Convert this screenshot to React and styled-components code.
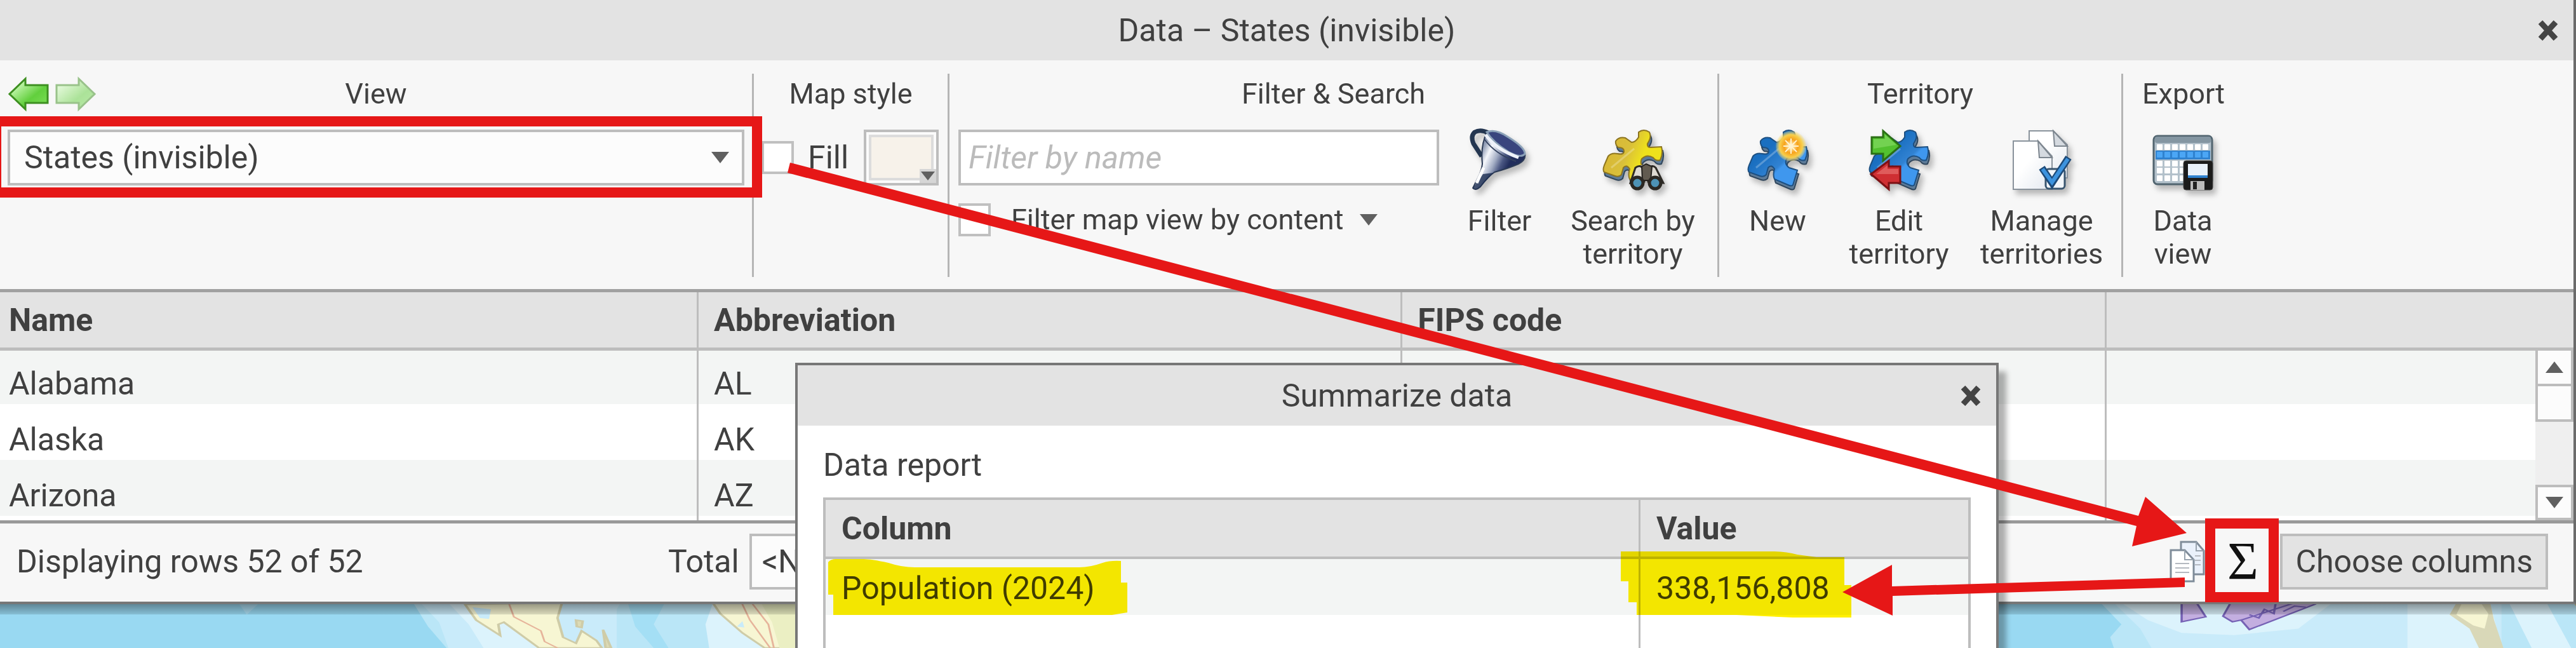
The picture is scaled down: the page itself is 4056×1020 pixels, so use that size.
import React from "react"

import styled, { createGlobalStyle, css } from 'styled-components'

const states = [
    { name: 'Alabama', code: 'AL' },
    { name: 'Alaska', code: 'AK' },
    { name: 'Arizona', code: 'AZ' },
]

const PIECE = 'M57 4 Q65 -2 74 4 Q78 12 71 22 Q70 28 76 28 L93 27 Q96 38 91 48 Q84 50 80 44 Q70 38 62 46 Q58 54 66 60 L79 64 L72 87 Q70 90 64 87 L43 78 Q40 72 43 62 Q38 54 33 60 L30 71 Q26 75 20 73 L3 67 Q0 64 3 56 L9 42 Q14 36 24 38 Q34 40 34 34 Q34 28 25 28 Q20 24 21 18 Q26 11 36 13 L46 20 Q52 20 57 12 Z'

const App = () => (
    <Page>
        <GlobalStyle />
        <Window>
            <TitleBar>
                Data – States (invisible)
                <CloseButton aria-label="Close data window"><CloseIcon /></CloseButton>
            </TitleBar>
            <Toolbar />
            <DataTable />
            <Footer />
        </Window>
        <MapStrip />
        <SummaryDialog />
        <Annotations />
    </Page>
)

const Toolbar = () => (
    <ToolbarRow>
        <Group $basis={1187}>
            <GroupHead>
                <HistoryButtons>
                    <PlainButton aria-label="Back"><GreenArrow /></PlainButton>
                    <PlainButton aria-label="Forward" disabled><GreenArrow forward /></PlainButton>
                </HistoryButtons>
                View
            </GroupHead>
            <GroupBody $pad={12}>
                <SelectBox $grow>
                    <select aria-label="View" defaultValue="states">
                        <option value="states">States (invisible)</option>
                    </select>
                    <Triangle />
                </SelectBox>
            </GroupBody>
        </Group>
        <Group $basis={308}>
            <GroupHead>Map style</GroupHead>
            <GroupBody $pad={12}>
                <CheckLabel $large><Check type="checkbox" />Fill</CheckLabel>
                <Swatch aria-label="Fill colour">
                    <SwatchColor />
                    <SwatchArrow><Triangle small /></SwatchArrow>
                </Swatch>
            </GroupBody>
        </Group>
        <Group $basis={1212}>
            <GroupHead>Filter &amp; Search</GroupHead>
            <GroupBody $pad={14} $padRight={18}>
                <FilterColumn>
                    <FilterInput placeholder="Filter by name" aria-label="Filter by name" />
                    <FilterOptions>
                        <CheckLabel><Check type="checkbox" />Filter map view by content</CheckLabel>
                        <PlainButton aria-label="Filter options"><Triangle /></PlainButton>
                    </FilterOptions>
                </FilterColumn>
                <ToolButton $width={190}><FunnelIcon />Filter</ToolButton>
                <ToolButton $width={230}><SearchPuzzleIcon />Search by territory</ToolButton>
            </GroupBody>
        </Group>
        <Group $basis={636}>
            <GroupHead>Territory</GroupHead>
            <GroupBody>
                <ToolButton $width={184}><NewPuzzleIcon />New</ToolButton>
                <ToolButton $width={198}><EditPuzzleIcon />Edit territory</ToolButton>
                <ToolButton $width={251}><ManageIcon />Manage territories</ToolButton>
            </GroupBody>
        </Group>
        <Group $basis={190} $last>
            <GroupHead>Export</GroupHead>
            <GroupBody>
                <ToolButton $width={188}><DataViewIcon />Data<br />view</ToolButton>
            </GroupBody>
        </Group>
    </ToolbarRow>
)

const DataTable = () => (
    <TableArea>
        <Table>
            <thead>
                <tr>
                    <th>Name</th>
                    <th>Abbreviation</th>
                    <th>FIPS code</th>
                    <th aria-label="Empty" />
                </tr>
            </thead>
            <tbody>
                {states.map(state => (
                    <tr key={state.code}>
                        <td>{state.name}</td>
                        <td>{state.code}</td>
                        <td />
                        <td />
                    </tr>
                ))}
                <FillerRow aria-hidden="true"><td /><td /><td /><td /></FillerRow>
            </tbody>
        </Table>
        <ScrollBar>
            <ScrollButton aria-label="Scroll up"><Triangle up /></ScrollButton>
            <ScrollThumb />
            <ScrollButton $bottom aria-label="Scroll down"><Triangle /></ScrollButton>
        </ScrollBar>
    </TableArea>
)

const Footer = () => (
    <FooterBar>
        <Status>Displaying rows 52 of 52</Status>
        <TotalLabel>
            Total
            <SelectBox $wide>
                <select defaultValue="none">
                    <option value="none">&lt;None&gt;</option>
                </select>
            </SelectBox>
        </TotalLabel>
        <FooterActions>
            <PlainButton aria-label="Copy"><CopyIcon /></PlainButton>
            <SigmaButton aria-label="Summarize data">Σ</SigmaButton>
            <ChooseButton>Choose columns</ChooseButton>
        </FooterActions>
    </FooterBar>
)

const SummaryDialog = () => (
    <Dialog role="dialog" aria-label="Summarize data">
        <TitleBar>
            Summarize data
            <CloseButton aria-label="Close summary"><CloseIcon /></CloseButton>
        </TitleBar>
        <DialogBody>
            <DialogText>Data report</DialogText>
            <ReportTable>
                <thead>
                    <tr><th>Column</th><th>Value</th></tr>
                </thead>
                <tbody>
                    <tr><td>Population (2024)</td><td>338,156,808</td></tr>
                    <tr aria-hidden="true"><td /><td /></tr>
                </tbody>
            </ReportTable>
        </DialogBody>
    </Dialog>
)

/* Icons */

const CloseIcon = () => (
    <svg width="32" height="32" viewBox="0 0 32 32">
        <path d="M4 3 L28 29 M28 3 L4 29" stroke="#444" strokeWidth="9" />
    </svg>
)

const Triangle = ({ up, small }) => (
    <TriangleSvg $small={small} viewBox="0 0 28 18" preserveAspectRatio="none">
        <path d={up ? 'M0 18 H28 L14 0 Z' : 'M0 0 H28 L14 18 Z'} fill="#606060" />
    </TriangleSvg>
)

const GreenArrow = ({ forward }) => (
    <svg width="66" height="56" viewBox="0 0 66 56" opacity={forward ? 0.5 : 1}>
        <defs>
            <linearGradient id="leaf" x1="0" y1="0" x2="1" y2="1">
                <stop offset="0.2" stopColor="#c4f7ae" />
                <stop offset="0.6" stopColor="#62cf3d" />
                <stop offset="1" stopColor="#7fe05a" />
            </linearGradient>
        </defs>
        <path
            d={forward ? 'M3 14 H38 V4 L63 28 L38 52 V42 H3 Z' : 'M63 14 H28 V4 L3 28 L28 52 V42 H63 Z'}
            fill="url(#leaf)"
            stroke="#3d8f20"
            strokeWidth="3"
        />
    </svg>
)

const FunnelIcon = () => (
    <IconSvg viewBox="0 0 96 96">
        <defs>
            <linearGradient id="steel" x1="0.1" y1="0.4" x2="0.7" y2="0.7">
                <stop offset="0.05" stopColor="#8f9bb4" />
                <stop offset="0.25" stopColor="#f6f8fc" />
                <stop offset="0.5" stopColor="#a3adc4" />
                <stop offset="0.7" stopColor="#4a5782" />
                <stop offset="0.9" stopColor="#222e5c" />
            </linearGradient>
        </defs>
        <path d="M30 5 Q18 -1 9 4 Q2 10 7 22 L20 42" fill="none" stroke="#243650" strokeWidth="7" />
        <path d="M28 5 Q18 24 21 54 Q20 64 14 76 L6 92 Q10 97 18 90 Q30 74 40 67 Q62 61 78 54 Q90 48 88 38 Q78 22 50 8 Q34 1 28 5 Z" fill="url(#steel)" stroke="#2b3a55" strokeWidth="2" />
        <path d="M28 4 Q42 -2 62 12 Q88 28 88 38 Q82 46 62 35 Q38 20 28 4 Z" fill="#39457e" stroke="#8ba1b8" strokeWidth="3" />
        <path d="M26 8 Q42 31 78 44" fill="none" stroke="#eef2fa" strokeWidth="5" />
        <path d="M24 15 Q42 39 74 50" fill="none" stroke="#33415f" strokeWidth="2" />
        <path d="M22 70 L38 68 L18 90 Q10 96 6 92 Z" fill="#1a2c50" opacity="0.8" />
        <path d="M12 84 L23 60" stroke="#fff" strokeWidth="5" />
    </IconSvg>
)

const Piece = ({ yellow }) => (
    <>
        <defs>
            <linearGradient id="gold" x1="0" y1="0.4" x2="1" y2="0.8">
                <stop offset="0" stopColor="#d8b735" />
                <stop offset="0.35" stopColor="#d9bf3a" />
                <stop offset="0.6" stopColor="#eee11c" />
            </linearGradient>
            <linearGradient id="azure" x1="0" y1="0.2" x2="0.8" y2="1">
                <stop offset="0.3" stopColor="#1a6fc0" />
                <stop offset="0.6" stopColor="#3182d2" />
                <stop offset="0.65" stopColor="#3f97ee" />
            </linearGradient>
        </defs>
        <path d={PIECE} transform="translate(2 6)" fill="#5d7b98" stroke="#30465c" strokeWidth="2" />
        <path d={PIECE} fill={yellow ? 'url(#gold)' : 'url(#azure)'} stroke={yellow ? '#8c7420' : '#1d4f80'} strokeWidth="2" />
        <path d="M14 60 L50 30" stroke="#fff" strokeWidth="3" opacity="0.25" />
    </>
)

const SearchPuzzleIcon = () => (
    <IconSvg viewBox="0 0 96 96">
        <defs>
            <clipPath id="aboveGlasses"><path d="M-2 -2 H98 V56 H60 L42 96 H-2 Z" /></clipPath>
        </defs>
        <g clipPath="url(#aboveGlasses)"><Piece yellow /></g>
        <path d="M52 60 Q60 54 64 62 L66 82 L44 84 Z M84 60 Q78 54 74 62 L72 82 L96 84 Z" fill="#dedad2" stroke="#2e2b26" strokeWidth="3" />
        <path d="M62 58 L69 54 L78 58 L76 80 H63 Z" fill="#625b50" stroke="#24211d" strokeWidth="2" />
        <circle cx="55" cy="84" r="9" fill="#4d92b5" stroke="#2b2823" strokeWidth="5" />
        <circle cx="83" cy="84" r="9" fill="#4d92b5" stroke="#2b2823" strokeWidth="5" />
    </IconSvg>
)

const NewPuzzleIcon = () => (
    <IconSvg viewBox="0 0 96 96">
        <defs>
            <radialGradient id="spark">
                <stop offset="0" stopColor="#fff" />
                <stop offset="0.2" stopColor="#ffd98a" />
                <stop offset="0.45" stopColor="#f7a21c" />
                <stop offset="0.75" stopColor="#f8cf4c" />
                <stop offset="1" stopColor="#f8e27a" stopOpacity="0.2" />
            </radialGradient>
        </defs>
        <Piece />
        <circle cx="69" cy="26" r="24" fill="url(#spark)" />
        <path d="M69 14 V38 M57 26 H81 M60 17 L78 35 M78 17 L60 35" stroke="#fff3cf" strokeWidth="2" />
    </IconSvg>
)

const EditPuzzleIcon = () => (
    <IconSvg viewBox="0 0 96 96">
        <Piece />
        <path d="M5 12 H23 V2 L50 26 L23 49 V38 H5 Z" fill="#52c12f" stroke="#2a6f14" strokeWidth="3" />
        <path d="M8 15 H26 V8 L44 24 L8 30 Z" fill="#a5ea85" opacity="0.4" />
        <path d="M50 58 H32 V49 L4 70 L32 94 V84 H50 Z" fill="#cf2f33" stroke="#7d1114" strokeWidth="3" />
        <path d="M47 62 H30 V56 L12 70 L47 70 Z" fill="#f08a86" opacity="0.5" />
    </IconSvg>
)

const ManageIcon = () => (
    <IconSvg viewBox="0 0 96 96">
        <defs>
            <linearGradient id="sheet" x1="0" y1="0" x2="1" y2="1">
                <stop offset="0.4" stopColor="#fff" />
                <stop offset="1" stopColor="#e3e8ef" />
            </linearGradient>
        </defs>
        <path d="M28 2 H66 L88 24 V76 H28 Z" fill="url(#sheet)" stroke="#8a939c" strokeWidth="2" />
        <path d="M66 2 L88 26 H68 Z" fill="#d5dae0" stroke="#7d868f" strokeWidth="2" />
        <path d="M3 18 H42 L64 42 V94 H3 Z" fill="url(#sheet)" stroke="#8a939c" strokeWidth="2" />
        <path d="M42 18 L64 44 H44 Z" fill="#d5dae0" stroke="#7d868f" strokeWidth="2" />
        <rect x="54" y="62" width="30" height="31" rx="5" fill="#f2f6fa" stroke="#39556e" strokeWidth="3" />
        <path d="M48 60 L64 84 L90 44" fill="none" stroke="#1d4a78" strokeWidth="11" />
        <path d="M49 62 L64 83 L89 46" fill="none" stroke="#3d93de" strokeWidth="6" />
    </IconSvg>
)

const DataViewIcon = () => (
    <IconSvg viewBox="0 0 96 96">
        <rect x="2" y="10" width="92" height="76" rx="6" fill="#b3c1cb" stroke="#51646f" strokeWidth="3" />
        <rect x="4" y="11" width="88" height="10" rx="3" fill="#8496a2" />
        <rect x="5" y="33" width="86" height="14" fill="#2f82cf" />
        {[23, 35, 49, 60, 72].map((y, row) => (
            [7, 19, 31, 43, 55, 67, 79].map(x => (
                <rect key={`${x}-${y}`} x={x} y={y} width="9" height="9" rx="1" fill={row === 1 ? '#4ba6f5' : '#fff'} />
            ))
        ))}
        <rect x="49" y="49" width="46" height="46" rx="4" fill="#1b1b1b" stroke="#444" strokeWidth="1" />
        <rect x="56" y="54" width="31" height="22" fill="#e9f1fa" />
        <rect x="56" y="72" width="31" height="4" fill="#2f82cf" />
        <rect x="60" y="81" width="22" height="14" fill="#bdbdbd" />
        <rect x="64" y="82" width="6" height="12" fill="#222" />
    </IconSvg>
)

const CopyIcon = () => (
    <svg width="56" height="66" viewBox="0 0 56 66">
        <path d="M18 2 H42 L54 16 V53 H18 Z" fill="#eaf1fb" stroke="#7f8c99" strokeWidth="3" />
        <path d="M2 15 H24 L38 30 V64 H2 Z" fill="#fff" stroke="#7f8c99" strokeWidth="3" />
        <path d="M24 15 V30 H38 M42 2 V16 H54" fill="none" stroke="#98a3ae" strokeWidth="2" />
        <path d="M9 36 H31 M9 43 H31 M9 50 H31 M40 24 H49 M40 31 H49 M40 38 H49" stroke="#b4b9c0" strokeWidth="2" />
    </svg>
)

const MapStrip = () => (
    <MapSvg viewBox="0 0 4056 68" preserveAspectRatio="xMinYMin slice">
        <defs>
            <linearGradient id="edge" x1="0" y1="0" x2="0" y2="1">
                <stop offset="0" stopColor="#000" stopOpacity="0.38" />
                <stop offset="1" stopColor="#000" stopOpacity="0.12" />
            </linearGradient>
        </defs>
        <rect width="4056" height="68" fill="#99d9f2" />
        <g transform="translate(360 -22) scale(.574 .3333)">
            <path d="M20 67 H70 L40 115 Z" fill="#aee0f5" />
            <path d="M490 60 L530 170 L580 270 H1560 V60 Z" fill="#bae6f7" />
            <path d="M510 60 L560 150 L585 270 H1040 V60 Z" fill="#c9ebfa" />
            <path d="M585 60 L640 160 L680 270 H830 L700 60 Z" fill="#dcf3fc" />
            <path d="M1070 60 L1090 170 L1140 270 H1180 L1140 160 L1170 60 Z" fill="#a4dff5" />
            <path d="M1300 60 L1280 160 L1290 270 H1450 L1340 60 Z" fill="#dcf3fc" />
            <path d="M885 60 L895 230 L1010 180 L1050 60 Z" fill="#c9ebfa" />
            <g stroke="#cfcca8" strokeWidth="7">
                <path d="M630 67 L660 140 L725 212 L720 160 L735 150 L830 270 H1000 L985 235 L945 190 L930 248 L895 220 L880 130 L892 60 Z" fill="#f7f6d3" />
                <path d="M930 140 L948 145 L945 175 L932 170 Z M1003 185 L1025 270 H1010 Z" fill="#dddbb5" />
                <path d="M1300 60 L1320 110 L1380 200 L1440 270 H1560 V60 Z" fill="#f7f6d3" />
            </g>
            <path d="M650 80 L700 90 L695 135 L670 130 Z M1380 145 L1385 175 L1365 170 Z" fill="#c9ebfa" />
            <path d="M1430 60 L1460 150 L1480 270 H1560 V60 Z" fill="#ebefc3" />
            <path d="M748 60 L762 125 L835 190 L845 240 L880 270 M1378 60 L1400 140 L1455 270 M1405 60 L1450 160 L1465 270" fill="none" stroke="#e6b49b" strokeWidth="5" />
        </g>
        <g transform="translate(3140 -22) scale(.584 .3333)">
            <path d="M205 60 L260 160 L230 220 L240 270 H1600 V60 Z" fill="#bae6f7" />
            <path d="M240 60 L310 180 L340 270 H1270 V60 Z" fill="#c9ebfa" />
            <path d="M260 60 L330 140 L420 200 L560 210 L730 180 L820 60 Z" fill="#dcf3fc" />
            <path d="M1020 60 V270 H1270 L1240 60 Z M1290 60 L1350 270 H1455 L1390 60 Z" fill="#dcf3fc" />
            <path d="M1150 60 L1132 115 L1185 180 L1210 270 H1275 L1250 140 L1240 60 Z" fill="#d9d8b8" />
            <path d="M1165 60 L1150 115 L1195 165 L1225 180 L1235 110 L1215 60 Z" fill="#f7f6d3" />
            <path d="M1460 60 L1495 125 L1485 60 Z M1550 95 H1570 V125 Z" fill="#d9d0a0" />
            <g fill="#c3aee0" stroke="#7662b5" strokeWidth="6">
                <path d="M420 60 V148 L484 125 L460 60 Z" />
                <path d="M550 60 L530 122 L555 148 L578 140 L600 184 L775 66 V60 Z" />
                <path d="M578 140 L720 60 M600 115 L625 130 L640 90 L665 110 L670 60 M690 100 L720 75 L750 80" fill="none" />
            </g>
        </g>
        <rect width="4056" height="16" fill="url(#edge)" />
    </MapSvg>
)

/* Call-outs drawn over the windows */

const Annotations = () => (
    <>
        <Highlights width="4056" height="1020" viewBox="0 0 4056 1020">
            <path d="M1304 885 Q1308 880 1316 880 H1360 Q1372 880 1399 886 Q1420 893 1440 893 H1700 Q1716 893 1736 886 Q1748 882 1765 883 V917 H1775 V964 L1751 968 H1312 V936 H1304 Z" />
            <path d="M2552 868 H2790 Q2812 868 2830 873 L2860 877 H2904 V921 H2915 V972 H2823 L2734 968 H2577 V948 H2564 V915 H2552 Z" />
        </Highlights>
        <Marks width="4056" height="1020" viewBox="0 0 4056 1020">
            <rect x="-6" y="191" width="1198" height="112" fill="none" stroke="#e61717" strokeWidth="16" />
            <rect x="3480" y="824" width="100" height="116" fill="none" stroke="#e61717" strokeWidth="16" />
            <path d="M1244 256 L3367 812 L3378 782 L3443 839 L3357 860 L3364 828 L1240 272 Z" />
            <path d="M3440 909 L2979 923 V889 L2901 932 L2980 969 L2980 938 L3440 924 Z" />
        </Marks>
    </>
)

const GlobalStyle = createGlobalStyle`
    body {
        margin: 0;
        background-color: #99d9f2;
    }
    *, *::before, *::after {
        box-sizing: border-box;
    }
    button, input, select {
        margin: 0;
        font: inherit;
        color: inherit;
    }
`

const Page = styled.div`
    position: relative;
    display: flex;
    flex-direction: column;
    min-height: 100vh;
    overflow: hidden;
    font-family: Roboto, "Liberation Sans", sans-serif;
    font-size: 50px;
    line-height: 64px;
    color: #404040;
`

const Window = styled.div`
    background-color: #f7f7f7;
    border-right: 4px solid #6b6b6b;
    border-bottom: 4px solid #777;
`

const MapSvg = styled.svg`
    display: block;
    flex: 1 0 68px;
    width: 100%;
    height: 68px;
`

const TitleBar = styled.div`
    position: relative;
    display: flex;
    align-items: center;
    justify-content: center;
    height: 95px;
    background-color: #e3e3e3;
`

const PlainButton = styled.button`
    display: inline-flex;
    align-items: center;
    justify-content: center;
    padding: 0;
    border: 0;
    background: none;
`

const CloseButton = styled(PlainButton)`
    position: absolute;
    top: 0;
    right: 8px;
    width: 64px;
    height: 95px;
`

const ToolbarRow = styled.div`
    display: flex;
    height: 365px;
    padding: 21px 0 19px;
    border-bottom: 5px solid #a0a0a0;
`

const Group = styled.div`
    flex: 0 1 ${p => p.$basis}px;
    min-width: 0;
    border-right: ${p => p.$last ? '0' : '3px solid #b5b5b5'};
`

const GroupHead = styled.div`
    position: relative;
    height: 64px;
    font-size: 45px;
    text-align: center;
`

const HistoryButtons = styled.div`
    position: absolute;
    top: 4px;
    left: 12px;
    display: flex;
    gap: 8px;
    line-height: 0;
`

const GroupBody = styled.div`
    display: flex;
    align-items: flex-start;
    padding: 24px ${p => p.$padRight || 0}px 0 ${p => p.$pad || 0}px;
`

const SelectBox = styled.span`
    display: flex;
    align-items: center;
    width: ${p => p.$wide ? '420px' : 'auto'};
    flex: ${p => p.$grow ? '1' : 'none'};
    height: 88px;
    margin-right: ${p => p.$grow ? '12px' : '0'};
    border: 4px solid #bdbdbd;
    background-color: #fcfcfc;
    select {
        flex: 1;
        height: 100%;
        padding: 0 0 0 ${p => p.$wide ? '16px' : '22px'};
        border: 0;
        background: none;
        appearance: none;
    }
    svg {
        margin-right: 20px;
    }
`

const TriangleSvg = styled.svg`
    flex: none;
    width: ${p => p.$small ? '22px' : '28px'};
    height: ${p => p.$small ? '14px' : '18px'};
`

const CheckLabel = styled.label`
    display: flex;
    align-items: center;
    gap: ${p => p.$large ? '22px' : '32px'};
    height: ${p => p.$large ? '88px' : '52px'};
`

const Check = styled.input`
    width: 51px;
    height: 52px;
    border: 4px solid #c0c0c0;
    background-color: #fff;
    appearance: none;
`

const Swatch = styled.button`
    position: relative;
    width: 118px;
    height: 88px;
    margin-left: auto;
    margin-right: 14px;
    padding: 4px;
    border: 4px solid #bdbdbd;
    background-color: #fbfbfb;
`

const SwatchColor = styled.span`
    display: block;
    height: 100%;
    border: 4px solid #dcdcdc;
    background-color: #f7f2ea;
`

const SwatchArrow = styled.span`
    position: absolute;
    right: 0;
    bottom: 0;
    display: flex;
    align-items: center;
    justify-content: center;
    width: 26px;
    height: 22px;
    background-color: #d6d6d6;
`

const FilterColumn = styled.div`
    flex: 1;
    display: flex;
    flex-direction: column;
    gap: 28px;
    min-width: 0;
`

const FilterInput = styled.input`
    width: 100%;
    height: 88px;
    padding: 0 12px;
    border: 4px solid #bdbdbd;
    background-color: #fff;
    &::placeholder {
        color: #bbb;
        font-style: italic;
        opacity: 1;
    }
`

const FilterOptions = styled.div`
    display: flex;
    gap: 26px;
    font-size: 45px;
`

const ToolButton = styled(PlainButton)`
    flex: 0 0 ${p => p.$width}px;
    display: block;
    padding: 0 16px;
    font-size: 45px;
    line-height: 52px;
    text-align: center;
`

const IconSvg = styled.svg`
    display: block;
    width: 96px;
    height: 96px;
    margin: 0 auto 22px;
    overflow: visible;
    filter: drop-shadow(5px 7px 4px rgba(0,0,0,.25));
`

const TableArea = styled.div`
    position: relative;
    border-bottom: 5px solid #999;
    background-color: #fff;
`

const tableBase = css`
    width: 100%;
    table-layout: fixed;
    border-collapse: separate;
    border-spacing: 0;
    th, td {
        border-right: 3px solid #bdbdbd;
        text-align: left;
    }
    th:last-child, td:last-child {
        border-right: 0;
    }
    th {
        background-color: #e3e3e3;
        font-weight: 700;
    }
`

const Table = styled.table`
    ${tableBase}
    th, td {
        padding: 0 0 0 24px;
    }
    th:first-child, td:first-child {
        padding-left: 14px;
    }
    th {
        width: 27.35%;
        height: 92px;
        border-bottom: 5px solid #bdbdbd;
    }
    th:first-child {
        width: 27.15%;
    }
    th:last-child {
        width: auto;
    }
    td {
        height: 88px;
        vertical-align: bottom;
    }
    tbody tr:first-child td {
        height: 84px;
    }
    tbody tr:nth-child(odd) {
        background-color: #f3f5f4;
    }
`

const FillerRow = styled.tr`
    && td {
        height: 7px;
    }
`

const ScrollBar = styled.div`
    position: absolute;
    top: 92px;
    right: 0;
    bottom: 0;
    display: flex;
    flex-direction: column;
    width: 60px;
    background-color: #efefef;
`

const ScrollButton = styled(PlainButton)`
    height: 56px;
    margin-top: ${p => p.$bottom ? 'auto' : '0'};
    border: 4px solid #bdbdbd;
    border-top-width: ${p => p.$bottom ? '4px' : '0'};
    background-color: #fcfcfc;
`

const ScrollThumb = styled.div`
    height: 56px;
    border: 4px solid #bdbdbd;
    border-top: 0;
    background-color: #fcfcfc;
`

const FooterBar = styled.div`
    display: flex;
    align-items: center;
    height: 123px;
    padding: 0 40px 4px 26px;
`

const Status = styled.div`
    flex: 0 1 1026px;
`

const TotalLabel = styled.label`
    display: flex;
    align-items: center;
    gap: 16px;
`

const FooterActions = styled.div`
    display: flex;
    align-items: center;
    margin-left: auto;
`

const SigmaButton = styled(PlainButton)`
    width: 118px;
    height: 88px;
    font-family: "Liberation Serif", serif;
    font-size: 84px;
    color: #111;
`

const ChooseButton = styled.button`
    height: 88px;
    padding: 0 20px;
    border: 4px solid #bdbdbd;
    background-color: #e3e3e3;
`

const Dialog = styled.div`
    position: absolute;
    top: 571px;
    right: 909px;
    bottom: 0;
    left: 1252px;
    border: 4px solid #777;
    border-bottom: 0;
    background-color: #fff;
    box-shadow: 12px 14px 8px rgba(0,0,0,.3);
`

const DialogBody = styled.div`
    padding: 30px 40px 0;
`

const DialogText = styled.p`
    margin: 0 0 19px;
`

const ReportTable = styled.table`
    ${tableBase}
    border: 4px solid #bdbdbd;
    border-bottom: 0;
    th, td {
        height: 88px;
        padding: 0 0 0 25px;
    }
    th {
        height: 93px;
        border-bottom: 4px solid #bdbdbd;
    }
    th:last-child {
        width: 516px;
    }
    td {
        padding-top: 4px;
    }
    tbody tr:first-child {
        background-color: #f3f5f4;
    }
`

const Highlights = styled.svg`
    position: absolute;
    top: 0;
    left: 0;
    fill: #fff000;
    mix-blend-mode: multiply;
    pointer-events: none;
`

const Marks = styled.svg`
    position: absolute;
    top: 0;
    left: 0;
    fill: #e61717;
    pointer-events: none;
`

export default App
